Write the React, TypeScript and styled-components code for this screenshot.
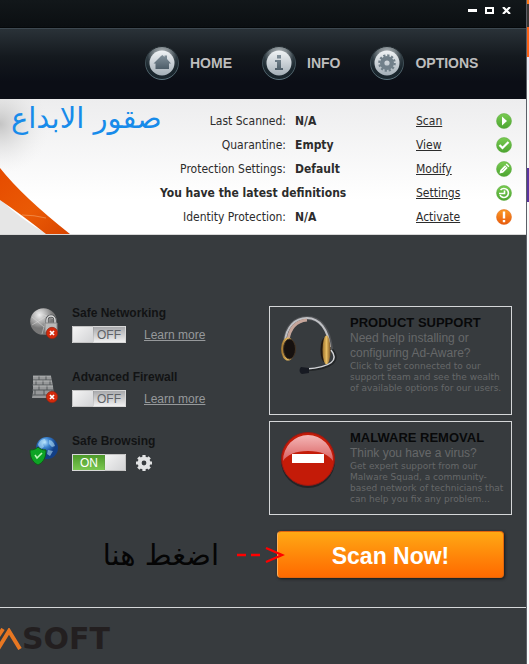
import React, { useState } from "react";
import styled, { createGlobalStyle } from "styled-components";

const GlobalStyle = createGlobalStyle`
  *, *::before, *::after { box-sizing: border-box; }
  body { margin: 0; background: #373b3e; font-family: "Liberation Sans", Arial, sans-serif; }
  button { font: inherit; color: inherit; border: 0; padding: 0; background: none; cursor: pointer; }
  h2, p, ul, dl { margin: 0; padding: 0; }
  svg { display: block; flex: none; }
`;

const Desktop = styled.div`
  display: grid;
  grid-template-columns: minmax(0, 1fr) 3px;
  min-height: 100vh;
`;

const Window = styled.div`
  display: flex;
  flex-direction: column;
  background: #373b3e;
`;

const Backdrop = styled.div`
  border-left: 1px solid #5c6068;
  background: linear-gradient(#ff7a14 0 4px, #3a3634 4px 27px, #ff6417 27px 57px, #e8e8f2 57px 80px,
    #fafafa 80px 168px, #5a35a0 168px 202px, #fafafa 202px);
`;

const TitleBar = styled.div`
  display: flex;
  justify-content: flex-end;
  align-items: flex-start;
  gap: 4px;
  height: 28px;
  padding: 4px 13px 0 0;
  background: linear-gradient(#12171a, #0b0f12);
  border-bottom: 1px solid #05080a;
`;

const WindowButton = styled.button`
  display: grid;
  place-items: center;
  width: 13px;
  height: 13px;
`;

const Header = styled.header`
  height: 71px;
  padding-left: 144px;
  border-top: 1px solid #3d4850;
  background: linear-gradient(#2a3238, #14191e 40%, #0b0e16 75%);
`;

const Nav = styled.nav`
  display: flex;
  align-items: center;
  gap: 29px;
  height: 68px;
`;

const NavLink = styled.a`
  display: flex;
  align-items: center;
  gap: 10px;
  color: #bdbdbd;
  font-size: 14px;
  font-weight: bold;
  text-decoration: none;
`;

const Status = styled.section`
  position: relative;
  display: flex;
  align-items: flex-start;
  height: 136px;
  padding-top: 10px;
  background: linear-gradient(#ededee, #ffffff 75%);
  border-bottom: 1px solid #d8d8d8;
`;

const Swoosh = styled.svg`
  position: absolute;
  left: 0;
  top: 0;
`;

const Watermark = styled.p`
  position: absolute;
  left: 11px;
  top: 0;
  color: #178bea;
  font: 29px/38px "DejaVu Sans", sans-serif;
`;

const StatusTable = styled.table`
  position: relative;
  width: 100%;
  border-collapse: collapse;
  table-layout: fixed;
  color: #2c2c2c;
  font: 12px/16px "DejaVu Sans Condensed", "DejaVu Sans", sans-serif;
  td, th { height: 24px; padding: 0; text-align: left; white-space: nowrap; }
  th { font-weight: normal; text-align: right; }
  td:nth-of-type(1) { padding-left: 9px; font-weight: bold; }
  td[colspan]:nth-of-type(1) { padding-left: 160px; }
  td:last-child { padding-left: 4px; }
`;

const StatusLink = styled.a`
  color: #2c2c2c;
`;

const Main = styled.main`
  display: grid;
  grid-template-columns: minmax(0, 1fr) 243px;
  gap: 0 1px;
  padding: 70px 14px 0 25px;
`;

const Features = styled.ul`
  list-style: none;
`;

const Feature = styled.li`
  display: grid;
  grid-template-columns: 40px 1fr;
  column-gap: 7px;
  height: 64px;
`;

const FeatureName = styled.h2`
  color: #121314;
  font-size: 12px;
  line-height: 16px;
`;

const FeatureControls = styled.div`
  display: flex;
  align-items: center;
  height: 24px;
  padding-top: 3px;
`;

const Toggle = styled.label<{ $on: boolean }>`
  position: relative;
  display: flex;
  flex-direction: ${(p) => (p.$on ? "row-reverse" : "row")};
  width: 54px;
  height: 17px;
  border: 1px solid #d8d8d8;
  background: ${(p) => (p.$on ? "linear-gradient(#4d9a2b, #7bc850)" : "linear-gradient(#a8a9ac, #f0f0f0)")};
  color: ${(p) => (p.$on ? "#ffffff" : "#606368")};
  font-size: 12px;
  line-height: 16px;
  text-align: center;
  cursor: pointer;
`;

const ToggleInput = styled.input`
  position: absolute;
  inset: 0;
  margin: 0;
  opacity: 0;
`;

const Knob = styled.span`
  width: 20px;
  background: linear-gradient(135deg, #f4f4f4, #d2d3d5);
  box-shadow: 0 0 1px #606060;
`;

const ToggleText = styled.span`
  flex: 1;
`;

const LearnMore = styled.a`
  margin-left: 18px;
  color: #96999b;
  font-size: 12px;
  line-height: 14px;
`;

const GearButton = styled.button`
  margin-left: 9px;
`;

const Cards = styled.div`
  display: flex;
  flex-direction: column;
  gap: 6px;
  padding-top: 1px;
`;

const Card = styled.a<{ $tall?: boolean }>`
  display: grid;
  grid-template-columns: 64px minmax(0, 1fr);
  column-gap: 8px;
  min-height: ${(p) => (p.$tall ? 109 : 94)}px;
  padding: 8px 2px 0 8px;
  border: 1px solid #d5d7d9;
  color: #666869;
  text-decoration: none;
`;

const CardTitle = styled.h2`
  color: #08090a;
  font-size: 13px;
  line-height: 16px;
`;

const CardLead = styled.p`
  font-size: 12px;
  line-height: 15px;
`;

const CardText = styled.p`
  font: 9px/11px "DejaVu Sans", sans-serif;
  white-space: pre;
`;

const Action = styled.section`
  display: flex;
  justify-content: flex-end;
  align-items: center;
  padding: 16px 22px 0 0;
`;

const Hint = styled.p`
  display: flex;
  align-items: center;
  margin-right: -8px;
  gap: 16px;
  z-index: 1;
  color: #050505;
  font: 29px/38px "DejaVu Sans", sans-serif;
`;

const ScanButton = styled.button`
  width: 227px;
  height: 47px;
  padding-top: 4px;
  border: 1px solid #e2660c;
  border-left-color: #ffb05a;
  border-radius: 4px;
  background: linear-gradient(#ffa914, #ff8509 55%, #ff6a00);
  box-shadow: 1px 1px 3px #17191a;
  color: #ffffff;
  font-size: 23px;
  font-weight: bold;
`;

const Footer = styled.footer`
  display: flex;
  align-items: flex-start;
  flex: 1;
  margin-top: 29px;
  padding-top: 20px;
  border-top: 1px solid #d5d7d9;
`;

const Brand = styled.span`
  color: #231f20;
  font: bold 30px/22px "DejaVu Sans", sans-serif;
`;

function NavIcon({ kind }: { kind: "home" | "info" | "options" }) {
  const id = "nav-" + kind;
  return (
    <svg width="36" height="36" viewBox="0 0 36 36" aria-hidden="true">
      <defs>
        <linearGradient id={id} x2="0" y2="1">
          <stop stopColor="#f0f3f5" />
          <stop offset="1" stopColor="#a4afb7" />
        </linearGradient>
        <radialGradient id={id + "-ring"} cx=".5" cy=".22" r=".6">
          <stop stopColor="#b4babe" />
          <stop offset=".4" stopColor="#7d868b" />
          <stop offset=".75" stopColor="#303c43" />
          <stop offset="1" stopColor="#1a262d" />
        </radialGradient>
        <linearGradient id={id + "-edge"} x2="0" y2="1">
          <stop stopColor="#20282d" />
          <stop offset="1" stopColor="#5b727c" />
        </linearGradient>
        <linearGradient id={id + "-ink"} x2="0" y2="1">
          <stop stopColor="#82919b" />
          <stop offset="1" stopColor="#4d5d68" />
        </linearGradient>
      </defs>
      <circle cx="18" cy="18" r="16.500" fill={`url(#${id}-ring)`} stroke={`url(#${id}-edge)`} />
      <circle cx="18" cy="18" r="12.500" fill={`url(#${id})`} />
      {kind === "home" && <path fill={`url(#${id}-ink)`} d="M9.500 18.500 17 11l1.500-1 2 2v-1.500H23V14l4 4.500h-2V24H11.500v-5.500z" />}
      {kind === "info" && <path fill={`url(#${id}-ink)`} d="M16 10h4v3.500h-4zM14 15h6v8h2v2h-8v-2h2v-6h-2z" />}
      {kind === "options" && (
        <g fill="none" stroke="#71808a">
          <circle cx="18" cy="18" r="4.800" strokeWidth="4.400" />
          <circle cx="18" cy="18" r="7.600" strokeWidth="2.400" strokeDasharray="2.200 1.779" />
        </g>
      )}
    </svg>
  );
}

type Mark = "play" | "check" | "pencil" | "refresh" | "alert";

function StatusIcon({ kind }: { kind: Mark }) {
  const alert = kind === "alert";
  return (
    <svg width="16" height="16" viewBox="0 0 16 16" fill="none" stroke="#fff" aria-hidden="true">
      <defs>
        <linearGradient id={"mark-" + kind} x2="0" y2="1">
          <stop stopColor={alert ? "#fb9a23" : "#79cb52"} />
          <stop offset="1" stopColor={alert ? "#e95a0c" : "#4da531"} />
        </linearGradient>
      </defs>
      <circle cx="8" cy="8" r="7.500" fill={`url(#mark-${kind})`} stroke={alert ? "#df641b" : "#58a83a"} strokeWidth=".5" />
      {kind === "play" && <path d="M6 3.500v9L11 8z" fill="#fff" stroke="none" />}
      {kind === "check" && <path d="m3.500 8 3 3L12.500 5" strokeWidth="2.200" />}
      {kind === "pencil" && (
        <>
          <path d="m3.500 12.500.8-3.500L9 4.300l2.700 2.700L7 11.700z" fill="#fff" stroke="none" />
          <path d="m9.700 3.600 1-1 2.700 2.700-1 1z" fill="#fff" stroke="none" />
          <path d="m6 10 4-4" stroke="#8bcf6c" strokeWidth=".7" />
        </>
      )}
      {kind === "refresh" && <path d="M4 10.200A4.500 4.500 0 1 0 4.500 5M3 8.500h5.500M8.500 5.500v3h-3" strokeWidth="1.600" />}
      {kind === "alert" && <path d="M8 2.500v7M8 11v2.200" strokeWidth="2.400" />}
    </svg>
  );
}

function RedBadge() {
  return (
    <g>
      <circle cx="27" cy="28" r="5.700" fill="#d32a0c" stroke="#8e2512" strokeWidth=".7" />
      <path d="m25 26 4 4m0-4-4 4" stroke="#fff" strokeWidth="1.700" />
    </g>
  );
}

function FeatureIcon({ kind }: { kind: "network" | "firewall" | "browser" }) {
  return (
    <svg width="40" height="40" viewBox="0 0 40 40" fill="none" aria-hidden="true">
      <defs>
        <radialGradient id="silver" cx=".35" cy=".25">
          <stop stopColor="#efefef" />
          <stop offset=".6" stopColor="#aaa" />
          <stop offset="1" stopColor="#777" />
        </radialGradient>
        <radialGradient id="ocean" cx=".4" cy=".25">
          <stop stopColor="#b5e2ff" />
          <stop offset=".45" stopColor="#3d85d0" />
          <stop offset="1" stopColor="#123f86" />
        </radialGradient>
      </defs>
      {kind === "network" && (
        <>
          <circle cx="18.500" cy="16.500" r="13.300" fill="url(#silver)" />
          <path d="m7 20 15-9 9 4M11 7l11 4-5 18M7 12l12 10 12-3" stroke="#ddd" strokeWidth=".7" opacity=".7" />
          <path d="M22 18v-3a4 4 0 0 1 8 0v3" stroke="#4c4f51" strokeWidth="3" />
          <path d="M22 18v-3a4 4 0 0 1 8 0v3" stroke="#ddd" strokeWidth="1.500" />
          <path d="M20 18h12v9H20z" fill="#b9b9b9" stroke="#888" />
          <RedBadge />
        </>
      )}
      {kind === "firewall" && (
        <>
          <path d="M8 7h18l2 10 1 12H7l1-6z" fill="#969899" />
          <path d="M8 11h19M7 16h21M7 21h22M7 26h22M14 7v4M21 7v4M11 11v5M18 11v5M25 11v5M14 16v5M22 16v5M10 21v5M19 21v5M27 21v5" stroke="#55585a" />
          <path d="M8 7h18M8 12h19M8 17h20" stroke="#c1c3c4" strokeWidth=".7" />
          <RedBadge />
        </>
      )}
      {kind === "browser" && (
        <>
          <circle cx="22" cy="15" r="11" fill="url(#ocean)" />
          <path d="M13 12c1-4 4-6 7-6l1 3-3 2 1 3-3 2zM24 7c3 0 5 3 6 6l-3 1-3-3zM23 17l5 1-3 5-3-2z" fill="#bce5fa" opacity=".55" />
          <path d="M5 17c4 0 6-1 8-3 2 2 4 3 8 3 0 7-2 12-8 15-6-3-8-8-8-15z" fill="#0da425" stroke="#13581a" />
          <path d="m10 22 2 3 5-5" stroke="#baf5b8" strokeWidth="1.600" />
        </>
      )}
    </svg>
  );
}

function Gear() {
  return (
    <svg width="18" height="18" viewBox="0 0 18 18" fill="none" stroke="#e2e3e4" aria-hidden="true">
      <circle cx="9" cy="9" r="4.400" strokeWidth="4" />
      <path d="M9 1v3M9 14v3M1 9h3M14 9h3M3.300 3.300l2.200 2.200M12.500 12.500l2.200 2.200M14.700 3.300l-2.200 2.200M5.500 12.500l-2.200 2.200" strokeWidth="3.200" />
    </svg>
  );
}

function Headset() {
  return (
    <svg width="64" height="64" viewBox="0 0 64 64" fill="none" aria-hidden="true">
      <defs>
        <linearGradient id="gold">
          <stop stopColor="#9a6f2b" />
          <stop offset=".5" stopColor="#e8bd62" />
          <stop offset="1" stopColor="#7a5323" />
        </linearGradient>
      </defs>
      <path d="M7 27C8 12 17 3 29 3c14 0 22 12 24 31" stroke="#525457" strokeWidth="4" />
      <path d="M7 27C8 12 17 3 29 3c13 0 21 12 23 29" stroke="#bfc0c4" strokeWidth="2" />
      <path d="M10 25C12 12 18 6 29 5" stroke="#c5a59a" strokeWidth="3" />
      <ellipse cx="10" cy="34" rx="7" ry="11.500" fill="url(#gold)" />
      <ellipse cx="11.500" cy="34" rx="6" ry="10" fill="#16110f" stroke="#433424" />
      <ellipse cx="46.500" cy="35" rx="4" ry="12" fill="#201710" />
      <ellipse cx="48.500" cy="35" rx="4" ry="14.500" fill="url(#gold)" />
      <path d="M54 35c8 10 1 18-26 20" stroke="#222527" strokeWidth="3" />
      <path d="M53 35c8 10 1 17-25 19" stroke="#d0d2d6" strokeWidth="1.500" />
      <path d="m23 52 8 1v5l-7 1c-3-1-3-5-1-7z" fill="#171a22" />
    </svg>
  );
}

function StopSign() {
  return (
    <svg width="64" height="64" viewBox="0 0 64 64" aria-hidden="true">
      <defs>
        <linearGradient id="gloss" x2="0" y2="1">
          <stop stopColor="#f4b7b7" />
          <stop offset="1" stopColor="#d96060" />
        </linearGradient>
      </defs>
      <circle cx="30" cy="31" r="27" fill="#222527" />
      <circle cx="30" cy="29" r="26.500" fill="#c41b08" stroke="#961914" />
      <path d="M5 31a25 26 0 0 1 50 0c-4-6-12-10-25-10S9 25 5 31z" fill="url(#gloss)" />
      <path d="M14 24h32v9H14z" fill="#fff" />
    </svg>
  );
}

const rows: { label?: string; value: string; action: string; mark: Mark }[] = [
  { label: "Last Scanned:", value: "N/A", action: "Scan", mark: "play" },
  { label: "Quarantine:", value: "Empty", action: "View", mark: "check" },
  { label: "Protection Settings:", value: "Default", action: "Modify", mark: "pencil" },
  { value: "You have the latest definitions", action: "Settings", mark: "refresh" },
  { label: "Identity Protection:", value: "N/A", action: "Activate", mark: "alert" },
];

function FeatureRow({ name, kind, initial = false }: { name: string; kind: "network" | "firewall" | "browser"; initial?: boolean }) {
  const [on, setOn] = useState(initial);
  return (
    <Feature>
      <FeatureIcon kind={kind} />
      <div>
        <FeatureName>{name}</FeatureName>
        <FeatureControls>
          <Toggle $on={on}>
            <ToggleInput type="checkbox" aria-label={name} checked={on} onChange={(e) => setOn(e.target.checked)} />
            <Knob />
            <ToggleText>{on ? "ON" : "OFF"}</ToggleText>
          </Toggle>
          {initial ? (
            <GearButton aria-label="Safe Browsing settings"><Gear /></GearButton>
          ) : (
            <LearnMore href="#learn">Learn more</LearnMore>
          )}
        </FeatureControls>
      </div>
    </Feature>
  );
}

export default function App() {
  return (
    <>
      <GlobalStyle />
      <Desktop>
        <Window>
          <TitleBar>
            <WindowButton aria-label="Minimize"><svg width="9" height="9"><path d="M0 3h9v3H0z" fill="#fff" /></svg></WindowButton>
            <WindowButton aria-label="Maximize"><svg width="9" height="7"><path d="M1 1h7v5H1z" fill="none" stroke="#fff" strokeWidth="2" /></svg></WindowButton>
            <WindowButton aria-label="Close"><svg width="9" height="7"><path d="m1 0 7 7m0-7L1 7" stroke="#fff" strokeWidth="2.200" /></svg></WindowButton>
          </TitleBar>
          <Header>
            <Nav>
              <NavLink href="#home"><NavIcon kind="home" />HOME</NavLink>
              <NavLink href="#info"><NavIcon kind="info" />INFO</NavLink>
              <NavLink href="#options"><NavIcon kind="options" />OPTIONS</NavLink>
            </Nav>
          </Header>
          <Status>
            <Swoosh width="120" height="135" viewBox="0 0 120 135" aria-hidden="true">
              <defs>
                <radialGradient id="shade" gradientUnits="userSpaceOnUse" cx="0" cy="25" r="50">
                  <stop stopColor="#c4c4c4" />
                  <stop offset="1" stopColor="#eee" stopOpacity="0" />
                </radialGradient>
                <linearGradient id="band" x2="1" y2="1">
                  <stop stopColor="#e64b00" />
                  <stop offset=".55" stopColor="#ea5a05" />
                  <stop offset="1" stopColor="#d94500" />
                </linearGradient>
              </defs>
              <path d="M0 0h80v135H0z" fill="url(#shade)" />
              <path d="M0 100q20 20 47 35H0z" fill="#e6e6e6" />
              <path d="M0 69q23 29 70 66H46Q22 116 0 101z" fill="url(#band)" />
              <path d="M22 116q12 0 24 3" stroke="#f49a5a" strokeWidth=".7" fill="none" />
            </Swoosh>
            <Watermark lang="ar" dir="rtl">صقور الابداع</Watermark>
            <StatusTable>
              <colgroup><col width="286" /><col /><col width="76" /><col width="34" /></colgroup>
              <tbody>
                {rows.map((r) => (
                  <tr key={r.action}>
                    {r.label && <th scope="row">{r.label}</th>}
                    <td colSpan={r.label ? undefined : 2}>{r.value}</td>
                    <td><StatusLink href="#status">{r.action}</StatusLink></td>
                    <td><StatusIcon kind={r.mark} /></td>
                  </tr>
                ))}
              </tbody>
            </StatusTable>
          </Status>
          <Main>
            <Features>
              <FeatureRow name="Safe Networking" kind="network" />
              <FeatureRow name="Advanced Firewall" kind="firewall" />
              <FeatureRow name="Safe Browsing" kind="browser" initial />
            </Features>
            <Cards>
              <Card href="#support" $tall>
                <Headset />
                <div>
                  <CardTitle>PRODUCT SUPPORT</CardTitle>
                  <CardLead>Need help installing or configuring Ad-Aware?</CardLead>
                  <CardText>{"Click to get connected to our\nsupport team and see the wealth\nof available options for our users."}</CardText>
                </div>
              </Card>
              <Card href="#removal">
                <StopSign />
                <div>
                  <CardTitle>MALWARE REMOVAL</CardTitle>
                  <CardLead>Think you have a virus?</CardLead>
                  <CardText>{"Get expert support from our\nMalware Squad, a community-\nbased network of technicians that\ncan help you fix any problem..."}</CardText>
                </div>
              </Card>
            </Cards>
          </Main>
          <Action>
            <Hint>
              <span lang="ar" dir="rtl">اضغط هنا</span>
              <svg width="50" height="20" viewBox="0 0 50 20" fill="none" stroke="#f00" strokeWidth="2.400" aria-hidden="true">
                <path d="M2 10h9m5 0h9M31 3l16 7-16 7" />
              </svg>
            </Hint>
            <ScanButton>Scan Now!</ScanButton>
          </Action>
          <Footer>
            <svg width="22" height="22" viewBox="0 0 22 22" fill="none" stroke="#e87722" strokeWidth="4" aria-hidden="true">
              <path d="M-3 10 3 1M-2 21 9 3l11 18" />
            </svg>
            <Brand>SOFT</Brand>
          </Footer>
        </Window>
        <Backdrop />
      </Desktop>
    </>
  );
}
